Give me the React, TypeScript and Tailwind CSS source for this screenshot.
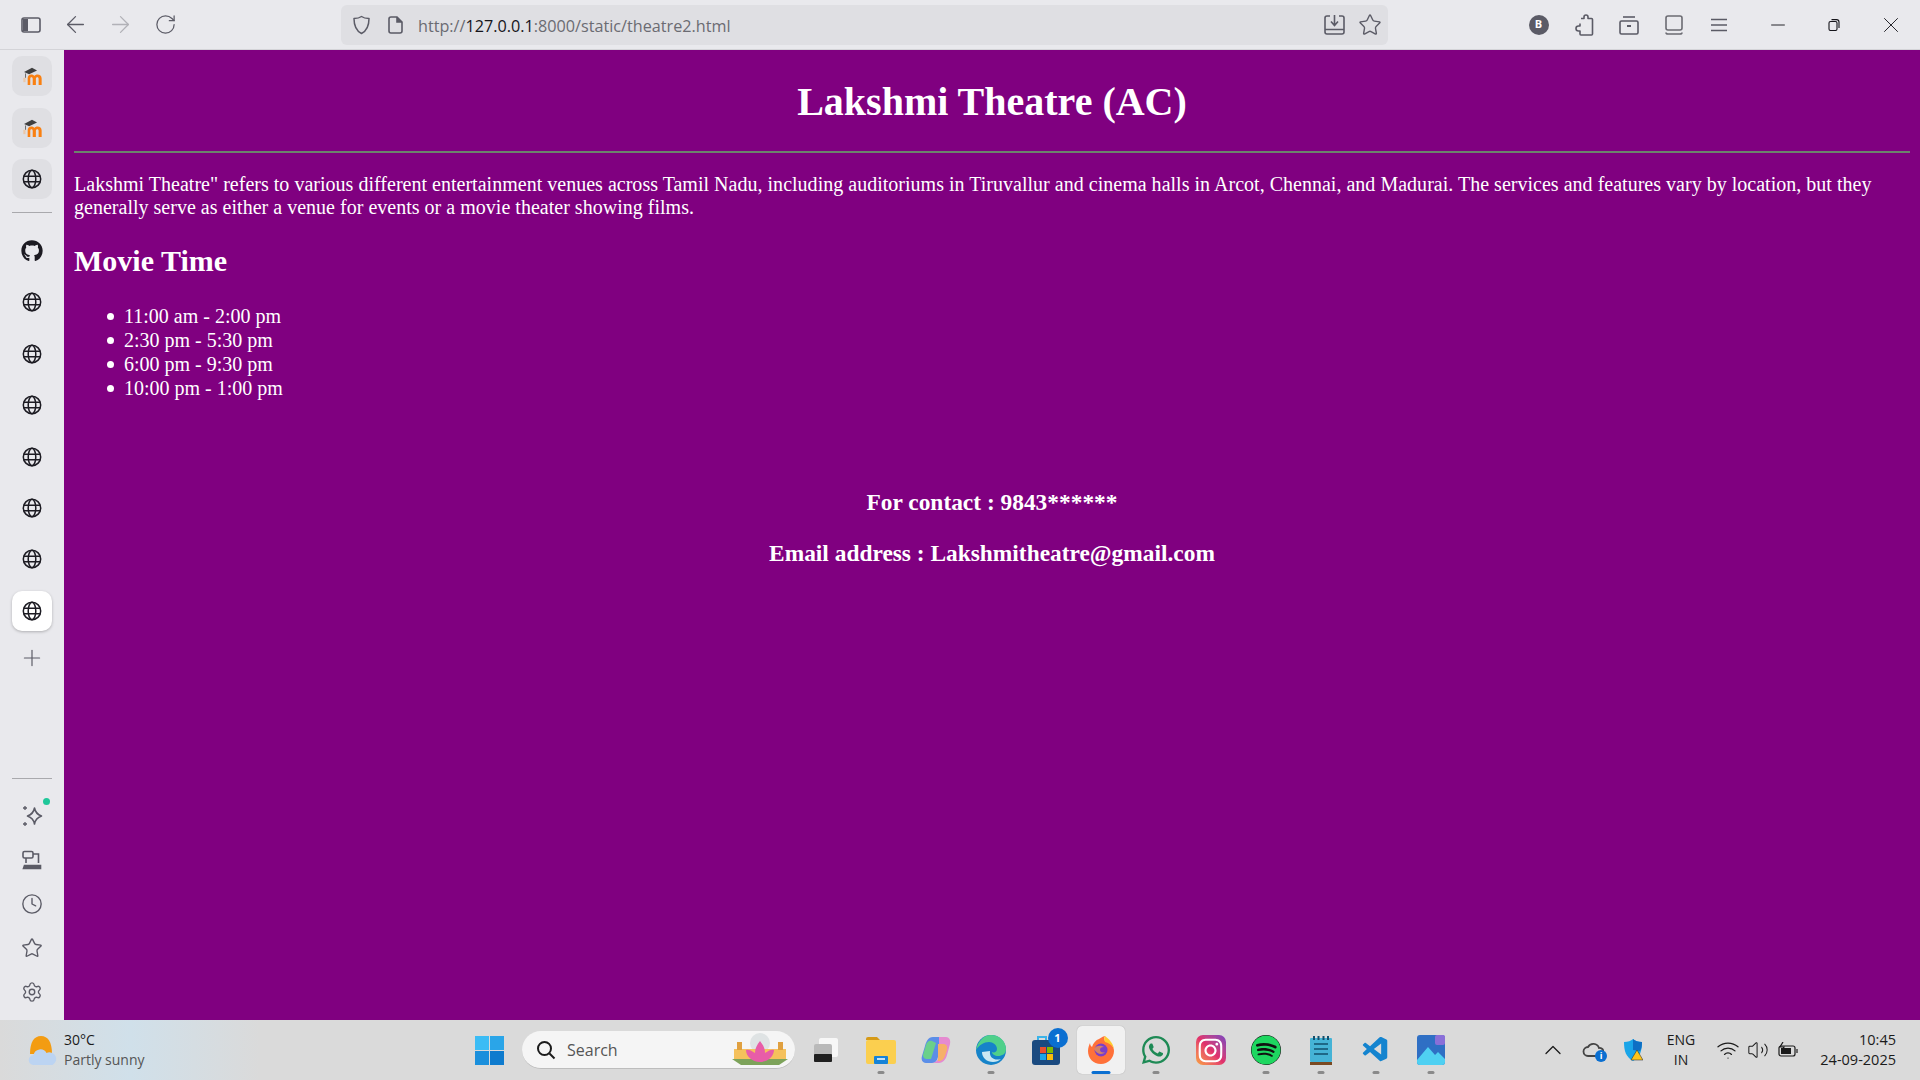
import { ArrowLeft, ArrowRight, ChevronUp, Clock, Minus, Plus, RotateCw, Settings, Star, Volume2, Wifi, X } from 'lucide-react'
import { FaGithub, FaInstagram, FaSpotify, FaWhatsapp } from 'react-icons/fa'
import { VscVscode } from 'react-icons/vsc'

const ui = "font-['Open_Sans','Noto_Sans',sans-serif]"

function GlobeIcon() {
  return (
    <svg width="20" height="20" viewBox="0 0 20 20" fill="none" stroke="#1c1b22" strokeWidth="1.5">
      <circle cx="10" cy="10" r="8.700" />
      <ellipse cx="10" cy="10" rx="3.800" ry="8.700" />
      <path d="M1.600 7.300h16.800M1.600 12.700h16.800" />
    </svg>
  )
}

function MoodleIcon() {
  return (
    <svg width="22" height="18" viewBox="2.500 1 15 12.500" fill="none">
      <path d="M4.500 4.500l5.500-3 3.500 2-5.500 2.600z" fill="#3f3f3f" />
      <path d="M5.500 5.500v3" stroke="#3f3f3f" strokeWidth="0.500" />
      <path d="M7 13.500V8.800c0-1.700 1-2.600 2.500-2.600 1 0 1.700.4 2.100 1 .5-.6 1.300-1 2.200-1 1.700 0 2.900 1 2.900 2.800v4.500h-2.100V9.300c0-.8-.3-1.200-.9-1.200s-1 .4-1 1.200v4.200h-2.200V9.300c0-.8-.3-1.200-.9-1.200s-.8.400-.8 1.200v4.200z" fill="#f98012" />
      <path d="M4 8.500h1.500v3H4z" fill="#f9b06b" opacity="0.5" />
    </svg>
  )
}

function Tile({ children, active, plain }: { children: React.ReactNode; active?: boolean; plain?: boolean }) {
  const tone = active ? 'bg-white shadow-[0_1px_3px_rgba(0,0,0,0.25)]' : plain ? '' : 'bg-[#dfdfe3]'
  return <div className={`w-10 h-10 rounded-[10px] flex items-center justify-center ${tone}`}>{children}</div>
}

function Sidebar() {
  const sites = [0, 1, 2, 3, 4, 5]
  return (
    <aside className="w-16 shrink-0 bg-[#e9e9ed] flex flex-col items-center pt-[6px] pb-[6px]">
      <div className="flex flex-col gap-[11.5px]">
        <Tile><MoodleIcon /></Tile>
        <Tile><MoodleIcon /></Tile>
        <Tile><GlobeIcon /></Tile>
      </div>
      <div className="w-10 h-px bg-[#a9a9ad] mt-[13px] mb-[18px]" />
      <div className="flex flex-col gap-[11.4px]">
        <Tile plain><FaGithub size={22} color="#1c1b22" /></Tile>
        {sites.map((s) => (
          <Tile plain key={s}><GlobeIcon /></Tile>
        ))}
        <Tile active><GlobeIcon /></Tile>
      </div>
      <Plus size={26} strokeWidth={1.100} color="#5b5b66" className="mt-[14px]" />
      <div className="mt-auto w-10 h-px bg-[#a9a9ad] mb-[15px]" />
      <div className="flex flex-col items-center">
        <div className="h-11 w-10 flex items-center justify-center relative">
          <svg width="24" height="24" viewBox="0 0 24 24" fill="none" stroke="#5b5b66" strokeWidth="1.600">
            <path d="M14.500 4c.7 4 2.800 6.500 7 8-4.200 1.500-6.300 4-7 8-.7-4-2.800-6.500-7-8 4.200-1.500 6.300-4 7-8z" strokeLinejoin="round" />
            <path d="M5 2v4M3 4h4M5 18v4M3 20h4" strokeWidth="1.300" />
          </svg>
          <span className="absolute right-[2px] top-[4px] w-[7px] h-[7px] rounded-full bg-[#1fc79a]" />
        </div>
        <div className="h-11 w-10 flex items-center justify-center">
          <svg width="20" height="20" viewBox="0 0 20 20" fill="none" stroke="#5b5b66" strokeWidth="1.600">
            <rect x="1" y="1.500" width="10" height="6.500" rx="1.500" />
            <path d="M11 4h5.500v9M4 8v5" />
            <path d="M1.500 18.500h17v-3H2.500z" fill="#5b5b66" />
          </svg>
        </div>
        <div className="h-11 w-10 flex items-center justify-center"><Clock size={22} strokeWidth={1.500} color="#5b5b66" /></div>
        <div className="h-11 w-10 flex items-center justify-center"><Star size={22} strokeWidth={1.500} color="#5b5b66" /></div>
        <div className="h-11 w-10 flex items-center justify-center"><Settings size={22} strokeWidth={1.500} color="#5b5b66" /></div>
      </div>
    </aside>
  )
}

function ToolBtn({ children }: { children: React.ReactNode }) {
  return <div className="w-[45px] h-full flex items-center justify-center shrink-0">{children}</div>
}

function Toolbar() {
  return (
    <header className="h-[50px] shrink-0 bg-[#e9e9ed] flex items-center pl-[8px] border-b border-[#d4d4d8]">
      <ToolBtn>
        <svg width="20" height="18" viewBox="0 0 20 18" fill="none" stroke="#5b5b66" strokeWidth="1.600">
          <rect x="1" y="2" width="18" height="14" rx="2" />
          <rect x="2" y="3" width="5" height="12" fill="#5b5b66" stroke="none" />
        </svg>
      </ToolBtn>
      <ToolBtn><ArrowLeft size={27} strokeWidth={1.150} color="#5b5b66" /></ToolBtn>
      <ToolBtn><ArrowRight size={27} strokeWidth={1.150} color="#b1b1b7" /></ToolBtn>
      <ToolBtn><RotateCw size={23} strokeWidth={1.300} color="#5b5b66" /></ToolBtn>
      <div className="w-[1047px] ml-[153px] h-10 rounded-[6px] bg-[#dfdfe3] flex items-center shrink-0">
        <svg className="ml-[11px]" width="19" height="20" viewBox="0 0 19 20" fill="none" stroke="#5b5b66" strokeWidth="1.500">
          <path d="M9.500 1.500c2 1.500 4.500 2 7.500 2 0 7-1.500 12-7.500 15-6-3-7.500-8-7.500-15 3 0 5.500-.5 7.500-2z" strokeLinejoin="round" />
        </svg>
        <svg className="ml-[17px]" width="15" height="18" viewBox="0 0 15 18" fill="none" stroke="#5b5b66" strokeWidth="1.600">
          <path d="M3 1h6l5 5v9a2 2 0 0 1-2 2H3a2 2 0 0 1-2-2V3a2 2 0 0 1 2-2z" />
          <path d="M9 1v5h5" fill="#5b5b66" />
        </svg>
        <div className={`ml-[15px] pt-[3px] text-[16.200px] text-[#6b6b72] ${ui}`}>
          http://<span className="text-[#15141a]">127.0.0.1</span>:8000/static/theatre2.html
        </div>
        <div className="ml-auto flex items-center mr-[6px] gap-[13px]">
          <svg width="21" height="21" viewBox="0 0 21 21" fill="none" stroke="#5b5b66" strokeWidth="1.600">
            <path d="M6 2H3a2 2 0 0 0-2 2v14a2 2 0 0 0 2 2h15a2 2 0 0 0 2-2V4a2 2 0 0 0-2-2h-3M1 15.500h19" />
            <path d="M10.500 1v9.500M7 7.500l3.500 4 3.500-4" />
          </svg>
          <Star size={24} strokeWidth={1.400} color="#5b5b66" />
        </div>
      </div>
      <div className="ml-[128px] flex h-full items-center">
        <ToolBtn>
          <div className={`w-5 h-5 rounded-full bg-[#5b5b66] text-white text-[11px] font-bold flex items-center justify-center ${ui}`}>B</div>
        </ToolBtn>
        <ToolBtn>
          <svg width="20" height="22" viewBox="0 0 20 22" fill="none" stroke="#5b5b66" strokeWidth="1.600" strokeLinejoin="round">
            <path d="M7 4.500h3V3a2 2 0 0 1 4 0v1.500h3.500a1 1 0 0 1 1 1V20a1 1 0 0 1-1 1H7a1 1 0 0 1-1-1v-3H4.500a2.500 2.500 0 0 1 0-5H6V9.500" />
          </svg>
        </ToolBtn>
        <ToolBtn>
          <svg width="20" height="20" viewBox="0 0 20 20" fill="none" stroke="#5b5b66" strokeWidth="1.600">
            <path d="M4 2h12" />
            <rect x="1" y="6" width="18" height="13" rx="1.500" />
            <path d="M8 11h4" strokeWidth="2" />
          </svg>
        </ToolBtn>
        <ToolBtn>
          <svg width="20" height="20" viewBox="0 0 20 20" fill="none" stroke="#6b6b72" strokeWidth="1.600">
            <rect x="2" y="1" width="16" height="14" rx="2" />
            <path d="M2 17.500c0 1 .5 1.500 2 1.500h12c1.500 0 2-.5 2-1.500" />
          </svg>
        </ToolBtn>
        <ToolBtn>
          <svg width="16" height="14" viewBox="0 0 16 14" fill="none" stroke="#5b5b66" strokeWidth="1.500">
            <path d="M0 1.500h16M0 7h16M0 12.500h16" />
          </svg>
        </ToolBtn>
      </div>
      <div className="flex h-full items-center ml-[9px]">
        <div className="w-[56px] flex justify-center"><Minus size={22} strokeWidth={1} color="#15141a" /></div>
        <div className="w-[56px] flex justify-center">
          <svg width="12" height="12" viewBox="0 0 12 12" fill="none" stroke="#15141a" strokeWidth="1.100">
            <rect x="1" y="2.500" width="8" height="9" rx="1.500" />
            <path d="M3.500 .600h5a2.500 2.500 0 0 1 2.500 2.500V9" />
          </svg>
        </div>
        <div className="w-[57px] flex justify-center"><X size={26} strokeWidth={0.850} color="#15141a" /></div>
      </div>
    </header>
  )
}

function Page() {
  const times = ['11:00 am - 2:00 pm', '2:30 pm - 5:30 pm', '6:00 pm - 9:30 pm', '10:00 pm - 1:00 pm']
  return (
    <main className="flex-1 bg-[#800080] text-white p-[10px] font-['Liberation_Serif',serif] overflow-hidden">
      <h1 className="text-[40px] leading-[46px] font-bold text-center mt-[19px]">Lakshmi Theatre (AC)</h1>
      <hr className="mt-[26px] border-0 h-[2px] bg-[#6c836c]" />
      <p className="text-[20px] leading-[23px] mt-[20px] tracking-[0.017px]">
        Lakshmi Theatre" refers to various different entertainment venues across Tamil Nadu, including auditoriums in Tiruvallur and cinema halls in Arcot, Chennai, and Madurai. The services and features vary by location, but they generally serve as either a venue for events or a movie theater showing films.
      </p>
      <h2 className="text-[30px] leading-[34px] font-bold mt-[25px]">Movie Time</h2>
      <ul className="pl-[33px] mt-[26px] text-[20px] leading-[24px]">
        {times.map((t) => (
          <li key={t} className="flex items-center">
            <span className="w-[7px] h-[7px] rounded-full bg-white mr-[10px]" />
            {t}
          </li>
        ))}
      </ul>
      <div className="text-center font-bold text-[23.400px] leading-[28px] mt-[88px]">For contact : 9843******</div>
      <div className="text-center font-bold text-[23.400px] leading-[28px] mt-[23px]">Email address : Lakshmitheatre@gmail.com</div>
    </main>
  )
}

function TaskIcon({ children, running, active }: { children: React.ReactNode; running?: boolean; active?: boolean }) {
  return (
    <div className={`w-[48px] h-[48px] mx-[3.500px] rounded-[5px] flex items-center justify-center relative ${active ? 'bg-[#f1f1f1] shadow-[0_0_1px_rgba(0,0,0,0.3)]' : ''}`}>
      {children}
      {running && <span className="absolute bottom-0 left-1/2 -translate-x-1/2 w-[7px] h-[3px] rounded-full bg-[#8a8a8a]" />}
      {active && <span className="absolute bottom-0 left-1/2 -translate-x-1/2 w-[19px] h-[3px] rounded-full bg-[#0a6fd1]" />}
    </div>
  )
}

function Taskbar() {
  return (
    <footer className={`h-[60px] shrink-0 bg-[#dadada] flex items-center text-[#1b1b1b] ${ui}`}>
      <div className="w-[260px] h-full flex items-center pl-[27px] bg-gradient-to-r from-[#dadada] via-[#d0e0ea] to-[#dadada] shrink-0">
        <svg width="30" height="32" viewBox="0 0 30 32">
          <path d="M3 20C3 8 7 2 14 2s11 6 11 18z" fill="#f39c12" />
          <path d="M7 31a5 5 0 0 1-.5-10 7 7 0 0 1 13-2 6 6 0 0 1 6 12z" fill="#bcd4f2" />
        </svg>
        <div className="ml-[7px] text-[14px] leading-[20px]">
          <div>30°C</div>
          <div className="text-[#555]">Partly sunny</div>
        </div>
      </div>
      <svg className="ml-[215px] shrink-0" width="29" height="29" viewBox="0 0 29 29">
        <path d="M0 0h14v14H0z" fill="#3bbcf5" />
        <path d="M15 0h14v14H15z" fill="#2aa5e8" />
        <path d="M0 15h14v14H0z" fill="#1a8fdc" />
        <path d="M15 15h14v14H15z" fill="#0e7bce" />
      </svg>
      <div className="ml-[18px] w-[273px] h-[38px] rounded-full bg-[#f5f5f5] border-b border-[#bdbdbd] flex items-center pl-[14px] shrink-0">
        <svg width="20" height="20" viewBox="0 0 20 20" fill="none" stroke="#1b1b1b" strokeWidth="2">
          <circle cx="8.500" cy="8.500" r="6.500" />
          <path d="M13.500 13.500l5 5" />
        </svg>
        <span className="ml-[11px] text-[16px] text-[#555]">Search</span>
        <svg className="ml-auto mr-[6px]" width="58" height="34" viewBox="0 0 58 34">
          <circle cx="29" cy="10" r="10" fill="#dfe3e4" />
          <rect x="3" y="16" width="52" height="10" fill="#f5c15c" />
          <path d="M1 26h56l-9 6H10z" fill="#7da35a" />
          <path d="M29 8c3 4 5 7 5 12 4-3 7-4 9-3 0 6-6 12-14 12s-14-6-14-12c2-1 5 0 9 3 0-5 2-8 5-12z" fill="#e85da8" />
          <rect x="6" y="9" width="5" height="8" fill="#e0a040" />
          <rect x="47" y="9" width="5" height="8" fill="#e0a040" />
        </svg>
      </div>
      <div className="ml-[3px] flex items-center">
        <TaskIcon>
          <svg width="26" height="26" viewBox="0 0 26 26">
            <rect x="6" y="1" width="19" height="19" rx="2" fill="#f7f7f7" />
            <rect x="1" y="7" width="18" height="18" rx="2" fill="#b9b9b9" />
            <rect x="1" y="17" width="18" height="8" rx="1" fill="#202020" />
          </svg>
        </TaskIcon>
        <TaskIcon running>
          <svg width="30" height="28" viewBox="0 0 30 28">
            <path d="M0 3a2 2 0 0 1 2-2h9l3 3h-14z" fill="#d69a17" />
            <rect x="0" y="4" width="30" height="24" rx="2" fill="#fbcf4f" />
            <rect x="8" y="20" width="14" height="8" rx="1" fill="#1683d8" />
            <path d="M11 23h8" stroke="#fff" strokeWidth="1.500" />
          </svg>
        </TaskIcon>
        <TaskIcon>
          <svg width="30" height="30" viewBox="0 0 30 30">
            <path d="M12 2h6c3 0 4 3 3 6l-4 14c-1 4-3 6-6 6H5c-4 0-5-4-4-7l3-10c1-4 3-9 8-9z" fill="#5b8ee8" />
            <path d="M2 20l3-10c1-3 3-5 6-4l4 2-5 16H6c-3 0-4-2-4-4z" fill="#6bd08a" />
            <path d="M18 2h7c3 0 5 3 4 7l-3 11c-1 4-4 8-8 8h-7c4 0 6-3 7-7z" fill="#e58ad0" />
            <path d="M17 9h5c3 0 5 2 4 6l-2 6c-1 3-3 5-7 5z" fill="#f6b06a" />
          </svg>
        </TaskIcon>
        <TaskIcon running>
          <svg width="30" height="30" viewBox="0 0 30 30">
            <circle cx="15" cy="15" r="15" fill="#1683c9" />
            <path d="M15 0c8 0 15 6 15 14 0 5-4 7-8 7-3 0-6-2-6-4 2 1 5 0 5-3 0-4-4-7-8-7-5 0-10 3-13 8C2 6 8 0 15 0z" fill="#4fd08a" />
            <path d="M6 17c0 6 5 10 11 10 3 0 6-1 8-3-6 2-12-1-11-8z" fill="#dff3f7" opacity="0.9" />
          </svg>
        </TaskIcon>
        <TaskIcon>
          <div className="relative">
            <svg width="30" height="30" viewBox="0 0 30 30">
              <path d="M7 6V2h8v4" fill="none" stroke="#3bb3e8" strokeWidth="2" />
              <rect x="1" y="5" width="28" height="25" rx="3" fill="#1a4a80" />
              <rect x="9" y="12" width="6" height="6" fill="#e8502f" />
              <rect x="16" y="12" width="6" height="6" fill="#7fba00" />
              <rect x="9" y="19" width="6" height="6" fill="#1aa5e8" />
              <rect x="16" y="19" width="6" height="6" fill="#fbbc09" />
            </svg>
            <span className="absolute -top-[7px] -right-[7px] w-5 h-5 rounded-full bg-[#0a6fd1] text-white text-[11px] font-bold flex items-center justify-center">1</span>
          </div>
        </TaskIcon>
        <TaskIcon active>
          <svg width="30" height="30" viewBox="0 0 30 30">
            <path d="M15 29C7 29 2 23 2 16c0-3 1-6 2-8 0 2 1 3 2 4 1-4 4-7 7-8 3-2 5-3 6-3-1 2-1 3 0 5 2 0 4 1 6 3 2 2 3 5 3 7 0 7-6 13-13 13z" fill="#ff7139" />
            <path d="M19 1c4 3 8 7 9 13-2-4-5-6-9-7-1-2-1-4 0-6z" fill="#ffcb2e" />
            <circle cx="15" cy="15" r="6.500" fill="#7b3fc9" />
            <path d="M8 14c2-4 7-4 10-2-3 0-4 1-4 3s3 3 5 2c-2 3-8 3-11-3z" fill="#ffa436" opacity="0.65" />
          </svg>
        </TaskIcon>
        <TaskIcon running>
          <FaWhatsapp size={32} color="#1e8a55" />
        </TaskIcon>
        <TaskIcon>
          <div className="w-[30px] h-[30px] rounded-[7px] bg-gradient-to-tr from-[#f9a13a] via-[#e1306c] to-[#7a3fc0] flex items-center justify-center">
            <FaInstagram size={27} color="#fff" />
          </div>
        </TaskIcon>
        <TaskIcon running>
          <FaSpotify size={30} color="#1ed760" className="bg-[#111] rounded-full" />
        </TaskIcon>
        <TaskIcon running>
          <svg width="24" height="30" viewBox="0 0 24 30">
            <rect x="1" y="3" width="22" height="24" rx="1" fill="#45b3d6" />
            <rect x="1" y="27" width="22" height="3" fill="#7b4a22" />
            <path d="M5 9h14M5 14h14M5 19h14" stroke="#12506e" strokeWidth="1.600" />
            <path d="M5 1v4M9.500 1v4M14.500 1v4M19 1v4" stroke="#12506e" strokeWidth="2" />
          </svg>
        </TaskIcon>
        <TaskIcon running>
          <VscVscode size={30} color="#1484cf" />
        </TaskIcon>
        <TaskIcon running>
          <svg width="28" height="30" viewBox="0 0 28 30">
            <rect width="28" height="30" rx="3" fill="#2f6fc4" />
            <path d="M0 25l11-13 7 8 3-3 7 7v3a3 3 0 0 1-3 3H3a3 3 0 0 1-3-3z" fill="#4fd0f2" />
            <rect x="18" y="0" width="10" height="10" rx="2" fill="#8a6fd8" />
          </svg>
        </TaskIcon>
      </div>
      <div className="ml-auto flex items-center h-full pr-[24px]">
        <div className="w-10 flex justify-center"><ChevronUp size={28} strokeWidth={1.100} /></div>
        <div className="w-10 flex justify-center">
          <div className="relative w-[22px] h-[18px]">
            <svg width="22" height="16" viewBox="0 0 22 16">
              <path d="M6 15a4.500 4.500 0 0 1 0-9 6 6 0 0 1 11 1 4 4 0 0 1 1 8z" fill="none" stroke="#444" strokeWidth="1.800" />
            </svg>
            <span className="absolute right-[-3px] bottom-[-3px] w-[12px] h-[12px] rounded-full bg-[#0a6fd1] text-white text-[9px] font-bold flex items-center justify-center">i</span>
          </div>
        </div>
        <div className="w-10 flex justify-center">
          <svg width="20" height="22" viewBox="0 0 20 22">
            <path d="M10 0c2 2 5 3 9 3 0 9-2 15-9 19C3 18 1 12 1 3c4 0 7-1 9-3z" fill="#1aa5e8" />
            <path d="M10 0c2 2 5 3 9 3 0 4-.5 7-2 9l-7-1z" fill="#0e6fc4" />
            <path d="M14 11l6 10h-12z" fill="#fcc419" stroke="#222" strokeWidth="0.500" />
          </svg>
        </div>
        <div className="w-14 text-center text-[14px] leading-[20px]">
          <div>ENG</div>
          <div>IN</div>
        </div>
        <div className="w-[38px] flex justify-center"><Wifi size={24} strokeWidth={1.250} /></div>
        <div className="w-[22px] flex justify-center"><Volume2 size={24} strokeWidth={1.100} /></div>
        <div className="w-[38px] flex justify-center">
          <svg width="20" height="16" viewBox="0 0 20 16" fill="none" stroke="#1b1b1b" strokeWidth="1.200">
            <rect x="1" y="4" width="16" height="10" rx="2" />
            <rect x="3" y="6" width="10" height="6" fill="#1b1b1b" stroke="none" />
            <path d="M19 7v4" />
            <path d="M5 0L2 5h4l-2 4" />
          </svg>
        </div>
        <div className="w-[89px] text-right text-[14.500px] leading-[20px]">
          <div>10:45</div>
          <div>24-09-2025</div>
        </div>
      </div>
    </footer>
  )
}

export default function App() {
  return (
    <div className="w-[1920px] h-[1080px] flex flex-col overflow-hidden">
      <Toolbar />
      <div className="flex-1 flex min-h-0">
        <Sidebar />
        <Page />
      </div>
      <Taskbar />
    </div>
  )
}
